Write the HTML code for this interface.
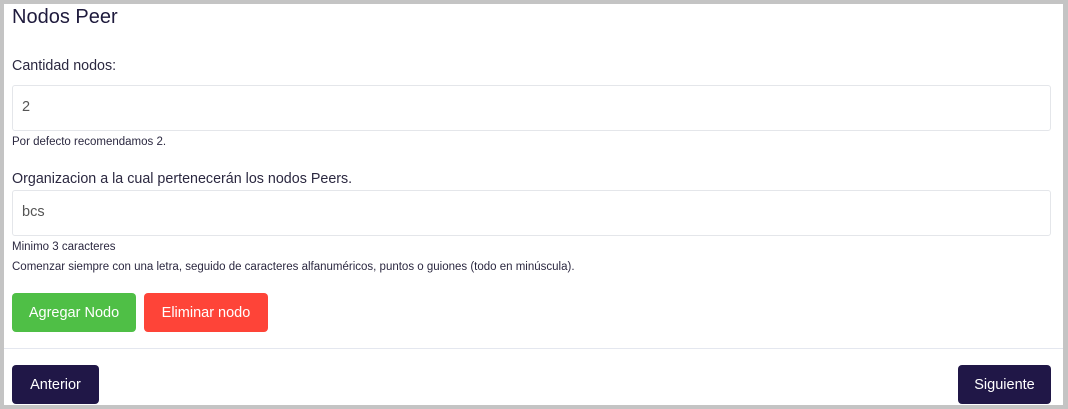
<!DOCTYPE html>
<html><head><meta charset="utf-8"><style>
html,body{margin:0;padding:0;width:1068px;height:409px;overflow:hidden;background:#c4c4c4;font-family:"Liberation Sans",sans-serif;}
.card{position:absolute;left:4px;top:4px;width:1059px;height:401px;background:#fff;overflow:hidden}
.a{position:absolute;white-space:nowrap}
.h{left:8px;top:2px;font-size:20px;color:#1e1a3c}
.l{font-size:14.3px;color:#2b2840;left:8px}
.inp{position:absolute;left:8px;width:1039px;height:46px;border:1px solid #e4e6ea;border-radius:3px;box-sizing:border-box;font-size:14.5px;color:#555;padding:13px 0 0 9px}
.s{font-size:11.5px;color:#2b2840;left:8px}
.btn{position:absolute;height:39px;border-radius:4px;color:#fff;font-size:14.5px;text-align:center;line-height:40px}
.sep{position:absolute;left:0;width:100%;top:344px;border-top:1px solid #e4e7ef}
</style></head><body><div class="card">
<div class="a h">Nodos Peer</div>
<div class="a l" style="top:54px">Cantidad nodos:</div>
<div class="inp" style="top:81px">2</div>
<div class="a s" style="top:132px">Por defecto recomendamos 2.</div>
<div class="a l" style="top:167px">Organizacion a la cual pertenecerán los nodos Peers.</div>
<div class="inp" style="top:186px">bcs</div>
<div class="a s" style="top:237px">Minimo 3 caracteres</div>
<div class="a s" style="top:257px">Comenzar siempre con una letra, seguido de caracteres alfanuméricos, puntos o guiones (todo en minúscula).</div>
<div class="btn" style="left:8px;top:289px;width:124px;background:#4fbf46">Agregar Nodo</div>
<div class="btn" style="left:140px;top:289px;width:124px;background:#fe4438">Eliminar nodo</div>
<div class="sep"></div>
<div class="btn" style="left:8px;top:361px;width:87px;background:#201747">Anterior</div>
<div class="btn" style="left:954px;top:361px;width:93px;background:#201747">Siguiente</div>
</div></body></html>
